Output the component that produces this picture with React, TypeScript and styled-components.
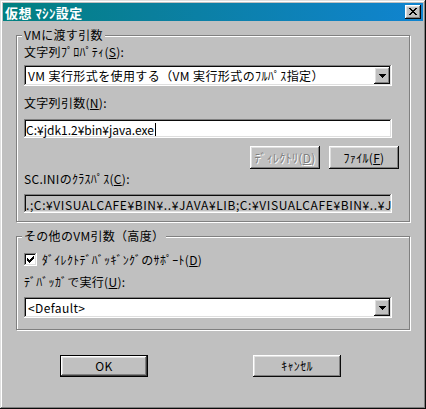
import React from "react";
import styled, { createGlobalStyle } from "styled-components";

const GlobalStyle = createGlobalStyle`
  html, body { margin: 0; padding: 0; background: #c0c0c0; }
  body {
    font-family: "Noto Sans CJK JP", "Noto Sans", sans-serif;
    font-size: 12px;
    letter-spacing: 0.3px;
    color: #000;
  }
  * { box-sizing: border-box; }
`;

const raised = `
  box-shadow: inset -1px -1px #0a0a0a, inset 1px 1px #ffffff,
    inset -2px -2px #808080, inset 2px 2px #dfdfdf;
`;
const sunken = `
  box-shadow: inset -1px -1px #ffffff, inset 1px 1px #808080,
    inset -2px -2px #dfdfdf, inset 2px 2px #0a0a0a;
`;

const Window = styled.div`
  width: 426px;
  height: 409px;
  background: #c0c0c0;
  padding: 3px;
  display: flex;
  flex-direction: column;
  box-shadow: inset -1px -1px #0a0a0a, inset 1px 1px #dfdfdf,
    inset -2px -2px #808080, inset 2px 2px #ffffff;
`;

const TitleBar = styled.div`
  height: 18px;
  display: flex;
  align-items: center;
  justify-content: space-between;
  padding: 0 2px 0 2px;
  background: linear-gradient(90deg, #008080 0%, #0a7f9c 35%, #1084d0 100%);
`;

const TitleText = styled.span`
  color: #fff;
  font-weight: bold;
  font-size: 13px;
  letter-spacing: 0.4px;
  line-height: 15px;
  white-space: pre;
`;

const CloseButton = styled.div`
  width: 16px;
  height: 14px;
  background: #c0c0c0;
  display: flex;
  align-items: center;
  justify-content: center;
  padding-bottom: 1px;
  ${raised}
`;

const Client = styled.div`
  padding: 7px 0 0 13px;
  display: flex;
  flex-direction: column;
`;

const Group = styled.fieldset<{ $mt?: number; $pt: number; $pb: number }>`
  margin: ${(p) => p.$mt ?? 0}px 0 0 0;
  width: 394px;
  padding: ${(p) => p.$pt}px 10px ${(p) => p.$pb}px 7px;
  border: 1px solid #808080;
  box-shadow: 1px 1px 0 #ffffff, inset 1px 1px 0 #ffffff;
  min-width: 0;
  display: flex;
  flex-direction: column;
`;

const Legend = styled.legend`
  padding: 0 2px;
  margin-left: -2px;
  line-height: 14px;
  height: 14px;
  background: #c0c0c0;
  white-space: nowrap;
`;

const Label = styled.div<{ $mt?: number }>`
  margin-top: ${(p) => p.$mt ?? 0}px;
  height: 14px;
  line-height: 14px;
  white-space: nowrap;
`;

const U = styled.span`
  text-decoration: underline;
  text-underline-offset: 1px;
`;

const Combo = styled.div<{ $mt?: number }>`
  margin-top: ${(p) => p.$mt ?? 0}px;
  width: 368px;
  height: 21px;
  background: #fff;
  padding: 2px;
  display: flex;
  align-items: center;
  ${sunken}
`;

const ComboText = styled.div`
  flex: 1;
  padding-left: 2px;
  line-height: 16px;
  letter-spacing: 0.4px;
  white-space: nowrap;
`;

const DropButton = styled.div`
  width: 16px;
  height: 17px;
  background: #c0c0c0;
  display: flex;
  align-items: center;
  justify-content: center;
  ${raised}
`;

const Edit = styled.div<{ $mt?: number; $disabled?: boolean; $ls: number }>`
  margin-top: ${(p) => p.$mt ?? 0}px;
  width: 368px;
  height: 19px;
  background: ${(p) => (p.$disabled ? "#c0c0c0" : "#ffffff")};
  padding: 2px 3px 0 2px;
  line-height: 15px;
  letter-spacing: ${(p) => p.$ls}px;
  white-space: nowrap;
  overflow: hidden;
  display: flex;
  align-items: center;
  ${sunken}
`;

const Caret = styled.span`
  display: inline-block;
  width: 1px;
  height: 13px;
  background: #000;
  margin-left: 1px;
`;

const ButtonRow = styled.div<{ $mt?: number }>`
  margin-top: ${(p) => p.$mt ?? 0}px;
  display: flex;
  justify-content: flex-end;
  gap: 9px;
`;

const Button = styled.div<{ $w: number; $h: number; $disabled?: boolean; $default?: boolean }>`
  width: ${(p) => p.$w}px;
  height: ${(p) => p.$h}px;
  background: #c0c0c0;
  display: flex;
  align-items: center;
  justify-content: center;
  line-height: 14px;
  white-space: nowrap;
  color: ${(p) => (p.$disabled ? "#808080" : "#000")};
  text-shadow: ${(p) => (p.$disabled ? "1px 1px 0 #ffffff" : "none")};
  ${(p) =>
    p.$default
      ? `border: 1px solid #000;
         box-shadow: inset -1px -1px #404040, inset 1px 1px #ffffff,
           inset -2px -2px #808080, inset 2px 2px #dfdfdf;`
      : raised}
`;

const CheckRow = styled.div`
  display: flex;
  align-items: center;
  gap: 5px;
  height: 14px;
  white-space: nowrap;
`;

const CheckBox = styled.div`
  width: 13px;
  height: 13px;
  background: #fff;
  display: flex;
  align-items: center;
  justify-content: center;
  ${sunken}
`;

const Footer = styled.div`
  margin-top: 25px;
  padding-left: 57px;
  display: flex;
  gap: 105px;
`;

const Arrow = () => (
  <svg width="7" height="4" viewBox="0 0 7 4" shapeRendering="crispEdges">
    <path d="M0 0h7v1H0zM1 1h5v1H1zM2 2h3v1H2zM3 3h1v1H3z" fill="#000" />
  </svg>
);

const CloseIcon = () => (
  <svg width="8" height="7" viewBox="0 0 8 7" shapeRendering="crispEdges">
    <path
      d="M0 0h2v1H0zM6 0h2v1H6zM1 1h2v1H1zM5 1h2v1H5zM2 2h4v1H2zM3 3h2v1H3zM2 4h4v1H2zM1 5h2v1H1zM5 5h2v1H5zM0 6h2v1H0zM6 6h2v1H6z"
      fill="#000"
    />
  </svg>
);

const CheckIcon = () => (
  <svg width="7" height="7" viewBox="0 0 7 7" shapeRendering="crispEdges">
    <path
      d="M6 0h1v3H6zM5 1h1v3H5zM4 2h1v3H4zM3 3h1v3H3zM2 4h1v3H2zM1 3h1v3H1zM0 2h1v3H0z"
      fill="#000"
    />
  </svg>
);

export default function App() {
  return (
    <>
      <GlobalStyle />
      <Window>
        <TitleBar>
          <TitleText>仮想 ﾏｼﾝ設定</TitleText>
          <CloseButton>
            <CloseIcon />
          </CloseButton>
        </TitleBar>
        <Client>
          <Group $pt={3} $pb={8}>
            <Legend>VMに渡す引数</Legend>
            <Label>
              文字列ﾌﾟﾛﾊﾟﾃｨ(<U>S</U>):
            </Label>
            <Combo $mt={6}>
              <ComboText>VM 実行形式を使用する（VM 実行形式のﾌﾙﾊﾟｽ指定）</ComboText>
              <DropButton>
                <Arrow />
              </DropButton>
            </Combo>
            <Label $mt={10}>
              文字列引数(<U>N</U>):
            </Label>
            <Edit $mt={9} $ls={0}>
              C:¥jdk1.2¥bin¥java.exe
              <Caret />
            </Edit>
            <ButtonRow $mt={8}>
              <Button $w={70} $h={23} $disabled>
                ﾃﾞｨﾚｸﾄﾘ(<U>D</U>)
              </Button>
              <Button $w={70} $h={23}>
                ﾌｧｲﾙ(<U>F</U>)
              </Button>
            </ButtonRow>
            <Label $mt={3}>
              SC.INIのｸﾗｽﾊﾟｽ(<U>C</U>):
            </Label>
            <Edit $mt={8} $disabled $ls={0.6}>
              .;C:¥VISUALCAFE¥BIN¥..¥JAVA¥LIB;C:¥VISUALCAFE¥BIN¥..¥JAVA¥LIB
            </Edit>
          </Group>
          <Group $mt={7} $pt={9} $pb={11}>
            <Legend>その他のVM引数（高度）</Legend>
            <CheckRow>
              <CheckBox>
                <CheckIcon />
              </CheckBox>
              <span>
                ﾀﾞｲﾚｸﾄﾃﾞﾊﾞｯｷﾞﾝｸﾞのｻﾎﾟｰﾄ(<U>D</U>)
              </span>
            </CheckRow>
            <Label $mt={9}>
              ﾃﾞﾊﾞｯｶﾞで実行(<U>U</U>):
            </Label>
            <Combo $mt={8}>
              <ComboText>&lt;Default&gt;</ComboText>
              <DropButton>
                <Arrow />
              </DropButton>
            </Combo>
          </Group>
        </Client>
        <Footer>
          <Button $w={88} $h={22} $default>
            OK
          </Button>
          <Button $w={88} $h={22}>
            ｷｬﾝｾﾙ
          </Button>
        </Footer>
      </Window>
    </>
  );
}
